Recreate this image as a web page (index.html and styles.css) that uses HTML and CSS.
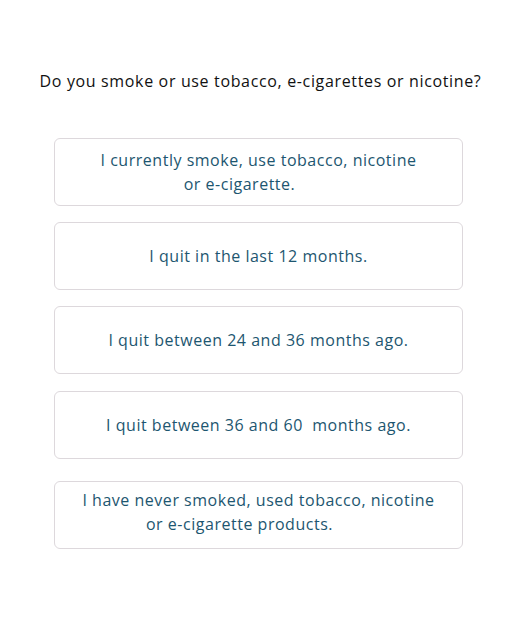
FILE: index.html
```html
<!DOCTYPE html>
<html lang="en">
<head>
<meta charset="utf-8">
<title>Smoking question</title>
<link rel="stylesheet" href="styles.css">
</head>
<body>
<main class="page">
  <h1 class="question">Do you smoke or use tobacco, e-cigarettes or nicotine?</h1>
  <div class="options">
    <button class="option"><span class="line">I currently smoke, use tobacco, nicotine</span><span class="line line-tail">or e-cigarette.</span></button>
    <button class="option"><span class="line">I quit in the last 12 months.</span></button>
    <button class="option"><span class="line">I quit between 24 and 36 months ago.</span></button>
    <button class="option option-gap"><span class="line">I quit between 36 and 60&nbsp; months ago.</span></button>
    <button class="option option-last"><span class="line">I have never smoked, used tobacco, nicotine</span><span class="line line-tail">or e-cigarette products.</span></button>
  </div>
</main>
</body>
</html>
```
FILE: styles.css
```css
html, body {
  margin: 0;
  padding: 0;
  background: #ffffff;
}
.page {
  width: 521px;
  font-family: "Open Sans", "DejaVu Sans", sans-serif;
}
.question {
  margin: 0;
  padding-top: 70px;
  text-align: center;
  font-size: 16px;
  font-weight: 400;
  line-height: 22px;
  letter-spacing: 0.65px;
  color: #111111;
}
.options {
  display: flex;
  flex-direction: column;
  gap: 16px;
  margin: 46px 58px 0 54px;
}
.option {
  height: 68px;
  display: flex;
  flex-direction: column;
  justify-content: center;
  align-items: center;
  border: 1px solid #ddd8dc;
  border-radius: 6px;
  background: #ffffff;
  padding: 0;
  font-family: inherit;
  font-size: 16px;
  line-height: 24px;
  letter-spacing: 0.52px;
  color: #1d5670;
}
.line {
  display: block;
}
.line-tail {
  padding-right: 38px;
}
.option-gap {
  margin-top: 1px;
}
.option-last {
  margin-top: 6px;
  padding-bottom: 6px;
}
```
